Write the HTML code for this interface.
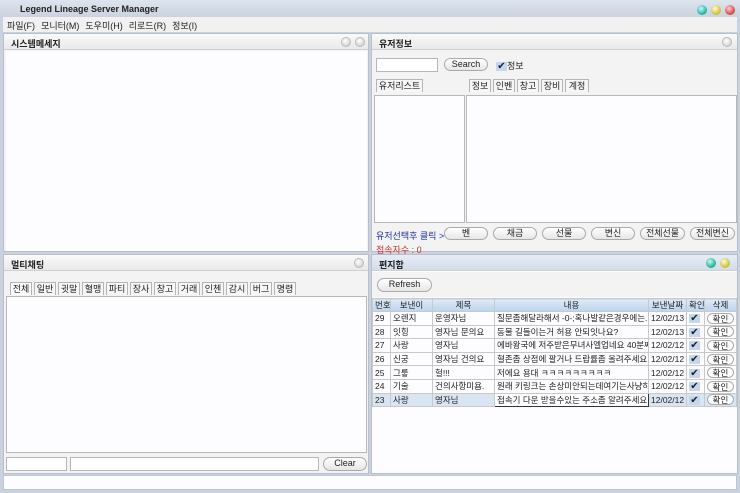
<!DOCTYPE html>
<html><head><meta charset="utf-8"><style>
*{margin:0;padding:0;box-sizing:border-box}
body{width:740px;height:493px;background:#c9d2de;font-family:"Liberation Sans","Noto Sans CJK KR",sans-serif;font-size:9px;color:#222;position:relative;overflow:hidden}
.a{position:absolute}
.title{left:0;top:0;width:740px;height:17px;background:linear-gradient(#dfe5ee,#c9d2de);font-weight:bold;font-size:9px;padding:4px 0 0 20px}
.menu{left:3px;top:17px;width:734px;height:15px;background:#f1f1f1;padding:2px 0 0 4px;font-size:9px}
.menu span{margin-right:6px}
.panel{background:#f3f3f3;border:1px solid #b8bfc9}
.hdr{position:absolute;left:0;top:0;right:0;height:16px;background:linear-gradient(#fafafa,#e9e9e9);border-bottom:1px solid #d0d0d0;font-weight:bold;padding:3px 0 0 7px}
.hdr.b{background:linear-gradient(#e7edf6,#d3dcea)}
.dot{position:absolute;top:3px;width:10px;height:10px;border-radius:50%;background:radial-gradient(circle at 40% 35%,#fff,#ddd 60%,#bbb);border:1px solid #bbb}
.box{position:absolute;background:#fdfcff;border:1px solid #b8b8b8}
.btn{position:absolute;height:13px;border:1px solid #aaa;border-radius:7px;background:linear-gradient(#fff,#e6e6e6);text-align:center;line-height:11px;font-size:9px}
.tab{position:absolute;height:13px;border:1px solid #b5b5b5;border-bottom:none;background:#f6f6f6;text-align:center;line-height:12px;font-size:9px}
table{border-collapse:collapse;position:absolute;left:372px;top:298px;width:364px;font-size:8.5px;table-layout:fixed}
td,th{border:1px solid #c9c9c9;height:13.6px;padding:0 2px;white-space:nowrap;overflow:hidden}
th{background:linear-gradient(#dfeaf7,#bcd3ee);font-weight:normal;text-align:center;height:12px}
tr.sel td{background:#d9e5f3}
.ck{display:inline-block;width:11px;height:9px;background:#c7d6ea;color:#123;font-size:10px;line-height:9px;text-align:center}
.kb{display:block;height:11px;border:1px solid #aaa;border-radius:6px;background:#fff;text-align:center;line-height:10px}
</style></head><body>
<div class="a title">Legend Lineage Server Manager</div>
<div class="a" style="left:697px;top:5px;width:10px;height:10px;border-radius:50%;background:radial-gradient(circle at 40% 35%,#bff,#2a9 70%)"></div>
<div class="a" style="left:711px;top:5px;width:10px;height:10px;border-radius:50%;background:radial-gradient(circle at 40% 35%,#ffc,#cb3 70%)"></div>
<div class="a" style="left:725px;top:5px;width:10px;height:10px;border-radius:50%;background:radial-gradient(circle at 40% 35%,#fcc,#c44 70%)"></div>
<div class="a menu"><span>파일(F)</span><span>모니터(M)</span><span>도우미(H)</span><span>리로드(R)</span><span>정보(I)</span></div>

<div class="a panel" style="left:3px;top:33px;width:366px;height:219px">
<div class="hdr">시스템메세지</div><div class="dot" style="left:337px"></div><div class="dot" style="left:351px"></div>
<div class="box" style="left:2px;top:17px;width:361px;height:200px;border:none;background:#fdfcff"></div>
</div>

<div class="a panel" style="left:371px;top:33px;width:367px;height:219px">
<div class="hdr">유저정보</div><div class="dot" style="left:350px"></div>
<div class="box" style="left:4px;top:24px;width:62px;height:14px;background:#fff"></div>
<div class="btn" style="left:72px;top:24px;width:44px">Search</div>
<div class="a" style="left:124px;top:25px"><span class="ck">✔</span>정보</div>
<div class="tab" style="left:4px;top:45px;width:47px">유저리스트</div>
<div class="tab" style="left:97px;top:45px;width:22px">정보</div>
<div class="tab" style="left:121px;top:45px;width:22px">인벤</div>
<div class="tab" style="left:145px;top:45px;width:22px">창고</div>
<div class="tab" style="left:169px;top:45px;width:22px">장비</div>
<div class="tab" style="left:193px;top:45px;width:24px">계정</div>
<div class="box" style="left:2px;top:61px;width:91px;height:128px"></div>
<div class="box" style="left:94px;top:61px;width:271px;height:128px"></div>
<div class="a" style="left:4px;top:195px;color:#2232a0">유저선택후 클릭 &gt;</div>
<div class="btn" style="left:72px;top:193px;width:44px">벤</div>
<div class="btn" style="left:121px;top:193px;width:44px">채금</div>
<div class="btn" style="left:170px;top:193px;width:44px">선물</div>
<div class="btn" style="left:219px;top:193px;width:44px">변신</div>
<div class="btn" style="left:268px;top:193px;width:45px">전체선물</div>
<div class="btn" style="left:318px;top:193px;width:45px">전체변신</div>
<div class="a" style="left:4px;top:209px;color:#d03030">접속자수 : 0</div>
</div>

<div class="a panel" style="left:3px;top:254px;width:366px;height:220px">
<div class="hdr">멀티채팅</div><div class="dot" style="left:350px"></div>
<div class="tab" style="left:6px;top:27px;width:22px;background:#fff">전체</div>
<div class="tab" style="left:30px;top:27px;width:22px">일반</div>
<div class="tab" style="left:54px;top:27px;width:22px">귓말</div>
<div class="tab" style="left:78px;top:27px;width:22px">혈맹</div>
<div class="tab" style="left:102px;top:27px;width:22px">파티</div>
<div class="tab" style="left:126px;top:27px;width:22px">장사</div>
<div class="tab" style="left:150px;top:27px;width:22px">창고</div>
<div class="tab" style="left:174px;top:27px;width:22px">거래</div>
<div class="tab" style="left:198px;top:27px;width:22px">인첸</div>
<div class="tab" style="left:222px;top:27px;width:22px">감시</div>
<div class="tab" style="left:246px;top:27px;width:22px">버그</div>
<div class="tab" style="left:270px;top:27px;width:22px">명령</div>
<div class="box" style="left:2px;top:41px;width:361px;height:157px"></div>
<div class="box" style="left:2px;top:202px;width:61px;height:14px;background:#fff"></div>
<div class="box" style="left:66px;top:202px;width:249px;height:14px;background:#fff"></div>
<div class="btn" style="left:319px;top:202px;width:44px;height:14px">Clear</div>
</div>

<div class="a panel" style="left:371px;top:254px;width:367px;height:220px;background:#fdfcff">
<div class="hdr b">편지함</div>
<div class="a" style="left:334px;top:3px;width:10px;height:10px;border-radius:50%;background:radial-gradient(circle at 40% 35%,#bfe,#2a8 70%)"></div>
<div class="a" style="left:348px;top:3px;width:10px;height:10px;border-radius:50%;background:radial-gradient(circle at 40% 35%,#ffc,#cb3 70%)"></div>
<div class="a" style="left:0;top:17px;width:365px;height:25px;background:#f3f3f3"></div>
<div class="btn" style="left:5px;top:23px;width:55px;height:14px">Refresh</div>
</div>
<table>
<colgroup><col style="width:18px"><col style="width:42px"><col style="width:62px"><col style="width:154px"><col style="width:38px"><col style="width:18px"><col style="width:32px"></colgroup>
<tr><th>번호</th><th>보낸이</th><th>제목</th><th>내용</th><th>보낸날짜</th><th>확인</th><th>삭제</th></tr>
<tr><td>29</td><td>오렌지</td><td>운영자님</td><td>질문좀해달라해서 -0-;혹나발같은경우에는...</td><td>12/02/13</td><td><span class="ck">✔</span></td><td><span class="kb">확인</span></td></tr>
<tr><td>28</td><td>잇힝</td><td>영자님 문의요</td><td>동물 길들이는거 허용 안되잇나요?</td><td>12/02/13</td><td><span class="ck">✔</span></td><td><span class="kb">확인</span></td></tr>
<tr><td>27</td><td>사랑</td><td>영자님</td><td>에바왕국에 저주받은무녀사엘업네요 40분째...</td><td>12/02/12</td><td><span class="ck">✔</span></td><td><span class="kb">확인</span></td></tr>
<tr><td>26</td><td>신궁</td><td>영자님 건의요</td><td>혈존좀 상점에 팔거나 드랍률좀 올려주세요.....</td><td>12/02/12</td><td><span class="ck">✔</span></td><td><span class="kb">확인</span></td></tr>
<tr><td>25</td><td>그릏</td><td>헐!!!</td><td>저에요 용대 ㅋㅋㅋㅋㅋㅋㅋㅋㅋ</td><td>12/02/12</td><td><span class="ck">✔</span></td><td><span class="kb">확인</span></td></tr>
<tr><td>24</td><td>기술</td><td>건의사항미욤.</td><td>원래 키링크는 손상미안되는데여기는사냥하...</td><td>12/02/12</td><td><span class="ck">✔</span></td><td><span class="kb">확인</span></td></tr>
<tr class="sel"><td>23</td><td>사랑</td><td>영자님</td><td style="background:#fff;border:1px solid #333">접속기 다운 받을수있는 주소좀 알려주세요.</td><td>12/02/12</td><td><span class="ck">✔</span></td><td><span class="kb">확인</span></td></tr>
</table>

<div class="a" style="left:3px;top:475px;width:734px;height:15px;background:#fdfcff;border:1px solid #c0c6d0"></div>
</body></html>
